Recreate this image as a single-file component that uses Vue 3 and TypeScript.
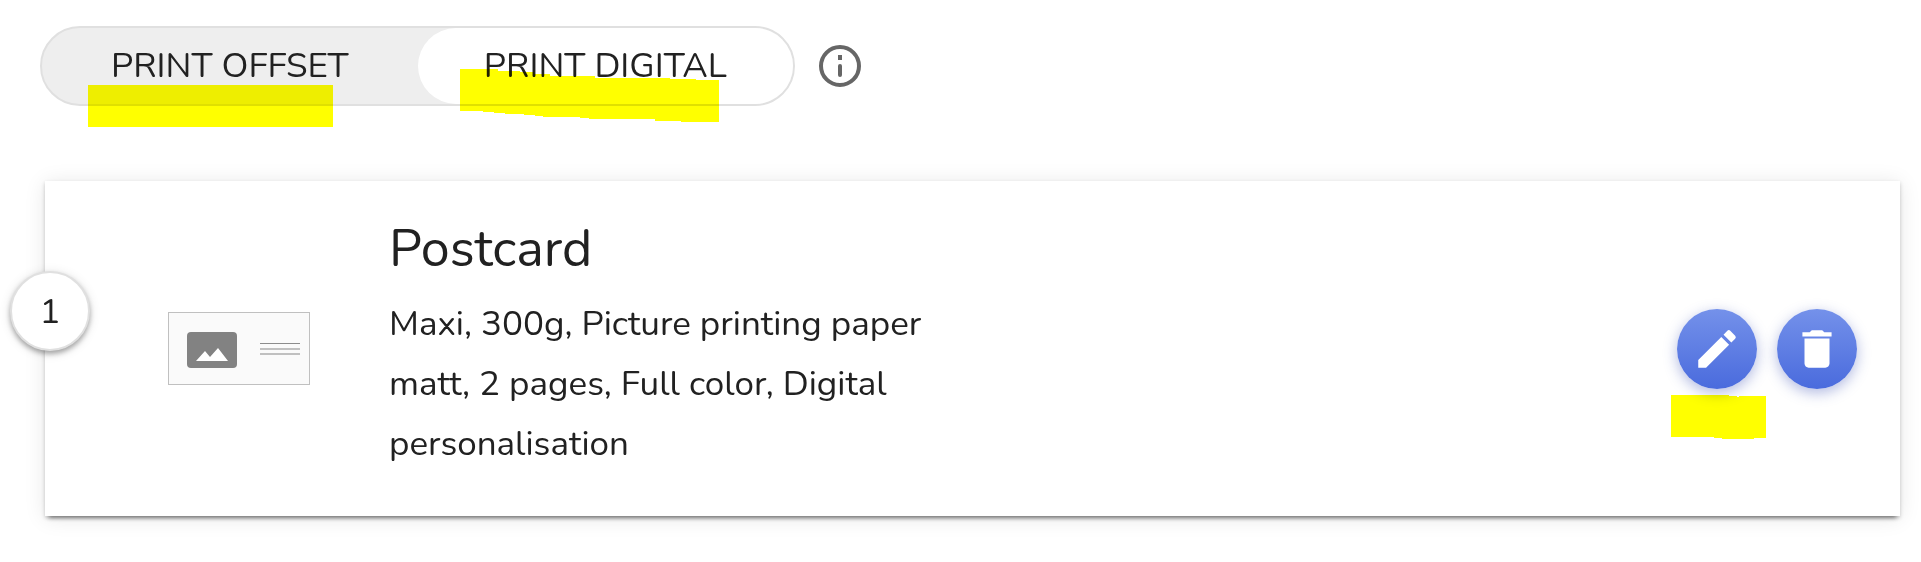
<script setup lang="ts">
import { ref } from 'vue'

type Method = 'offset' | 'digital'

interface Item {
  position: number
  title: string
  description: string
}

const methods: { id: Method; label: string }[] = [
  { id: 'offset', label: 'PRINT OFFSET' },
  { id: 'digital', label: 'PRINT DIGITAL' },
]

const selected = ref<Method>('digital')

const items = ref<Item[]>([
  {
    position: 1,
    title: 'Postcard',
    description: 'Maxi, 300g, Picture printing paper matt, 2 pages, Full color, Digital personalisation',
  },
])

function remove(position: number): void {
  items.value = items.value.filter((item) => item.position !== position)
}
</script>

<template>
  <main class="page">
    <div class="toolbar">
      <div class="switch" role="group" aria-label="Print method">
        <button
          v-for="method in methods"
          :key="method.id"
          type="button"
          class="segment"
          :class="{ active: selected === method.id }"
          :aria-pressed="selected === method.id"
          @click="selected = method.id"
        >
          {{ method.label }}
        </button>
        <svg class="marker marker-offset" viewBox="0 0 245 42" aria-hidden="true">
          <path d="M0 0H245V42H0Z" />
        </svg>
        <svg class="marker marker-digital" viewBox="0 0 259 53" aria-hidden="true">
          <path d="M0 0H38V2H60V3H74V5H90V7H135V9H210V10H236V11H259V53H221V52H195V50H129V49H120V48H83V47H75V46H64V45H45V44H34V43H23V42H0Z" />
        </svg>
      </div>
      <button type="button" class="info" aria-label="Information">
        <svg viewBox="0 0 50 50" aria-hidden="true">
          <circle cx="25" cy="25" r="19" fill="none" stroke="#666" stroke-width="4" />
          <rect x="23" y="14" width="4" height="5" fill="#666" />
          <rect x="23" y="23" width="4" height="13" rx="2" fill="#666" />
        </svg>
      </button>
    </div>

    <article v-for="item in items" :key="item.position" class="card">
      <span class="badge">{{ item.position }}</span>
      <svg class="thumb" viewBox="0 0 142 73" role="img" aria-label="Postcard preview">
        <rect x="0.5" y="0.5" width="141" height="72" fill="#fafafa" stroke="#c0c0c0" />
        <rect x="19" y="20" width="50" height="36" rx="4" fill="#828282" />
        <path d="M28 49L37 39L42 45L50 36L60 49Z" fill="#fff" />
        <path d="M92 31.5H132" stroke="#8c8c8c" />
        <path d="M92 37H132M92 42H132" stroke="#c0c0c0" stroke-width="2" />
      </svg>
      <div class="details">
        <h2>{{ item.title }}</h2>
        <p>{{ item.description }}</p>
      </div>
      <div class="actions">
        <button type="button" class="action" aria-label="Edit">
          <svg viewBox="0 0 24 24" aria-hidden="true">
            <path d="M3 17.25V21h3.75L17.81 9.94l-3.75-3.75L3 17.25zM20.71 7.04a1 1 0 0 0 0-1.41l-2.34-2.34a1 1 0 0 0-1.41 0l-1.83 1.83 3.75 3.75 1.83-1.83z" />
          </svg>
        </button>
        <button type="button" class="action" aria-label="Delete" @click="remove(item.position)">
          <svg viewBox="0 0 24 24" aria-hidden="true">
            <path d="M6 19c0 1.1.9 2 2 2h8c1.1 0 2-.9 2-2V7H6v12zM19 4h-3.5l-1-1h-5l-1 1H5v2h14V4z" />
          </svg>
        </button>
        <svg class="marker marker-edit" viewBox="0 0 95 44" aria-hidden="true">
          <path d="M0 0H58V1H66V2H68V1H95V43H83V44H51V43H43V42H0Z" />
        </svg>
      </div>
    </article>
  </main>
</template>

<style>
body {
  margin: 0;
  background: #fff;
}
</style>

<style scoped>
.page {
  box-sizing: border-box;
  padding: 26px 21px 46px 40px;
  color: #212121;
  font-family: Nunito, Inter, sans-serif;
  font-weight: 400;
}

button {
  margin: 0;
  padding: 0;
  border: 0;
  background: none;
  color: inherit;
  font: inherit;
  cursor: pointer;
}

.toolbar {
  display: flex;
  align-items: center;
  gap: 20px;
}

.switch {
  position: relative;
  display: grid;
  grid-template-columns: 1fr 1fr;
  box-sizing: border-box;
  width: 755px;
  border: 2px solid #e0e0e0;
  border-radius: 40px;
  background: #eee;
}

.segment {
  height: 76px;
  border-radius: 38px;
  font-size: 35px;
  line-height: 40px;
  white-space: nowrap;
}

.segment.active {
  background: #fff;
}

.info {
  display: flex;
}

.info svg {
  width: 50px;
  height: 50px;
}

.marker {
  position: absolute;
  fill: #ff0;
  mix-blend-mode: multiply;
  pointer-events: none;
}

.marker-offset {
  left: 46px;
  top: 57px;
  width: 245px;
}

.marker-digital {
  left: 418px;
  top: 41px;
  width: 259px;
}

.marker-edit {
  left: -6px;
  top: 86px;
  width: 95px;
}

.card {
  position: relative;
  display: flex;
  align-items: center;
  box-sizing: border-box;
  margin: 75px 0 0 5px;
  padding: 38px 43px 38px 123px;
  background: #fff;
  box-shadow:
    0 6px 4px -4px rgba(0, 0, 0, 0.4),
    0 2px 4px rgba(0, 0, 0, 0.2),
    0 2px 20px rgba(0, 0, 0, 0.1);
}

.badge {
  position: absolute;
  left: -35px;
  top: 90px;
  box-sizing: border-box;
  width: 80px;
  height: 80px;
  border: 2px solid #e0e0e0;
  border-radius: 50%;
  background: #fff;
  box-shadow: 0 3px 5px rgba(0, 0, 0, 0.3), 0 2px 12px rgba(0, 0, 0, 0.12);
  font-size: 35px;
  line-height: 78px;
  text-align: center;
}

.thumb {
  flex: none;
  width: 142px;
  height: 73px;
}

.details {
  width: 560px;
  margin-left: 79px;
  padding-bottom: 4px;
}

.details h2 {
  margin: 0 0 15px;
  font-size: 52px;
  font-weight: 400;
  line-height: 60px;
}

.details p {
  margin: 0;
  font-size: 35px;
  line-height: 60px;
}

.actions {
  position: relative;
  display: flex;
  gap: 20px;
  margin-left: auto;
}

.action {
  display: flex;
  align-items: center;
  justify-content: center;
  width: 80px;
  height: 80px;
  border-radius: 50%;
  background: linear-gradient(#7491ea, #4a6bdd);
  box-shadow: 0 4px 14px rgba(60, 80, 180, 0.4);
}

.action svg {
  width: 50px;
  height: 50px;
  fill: #fff;
}
</style>
